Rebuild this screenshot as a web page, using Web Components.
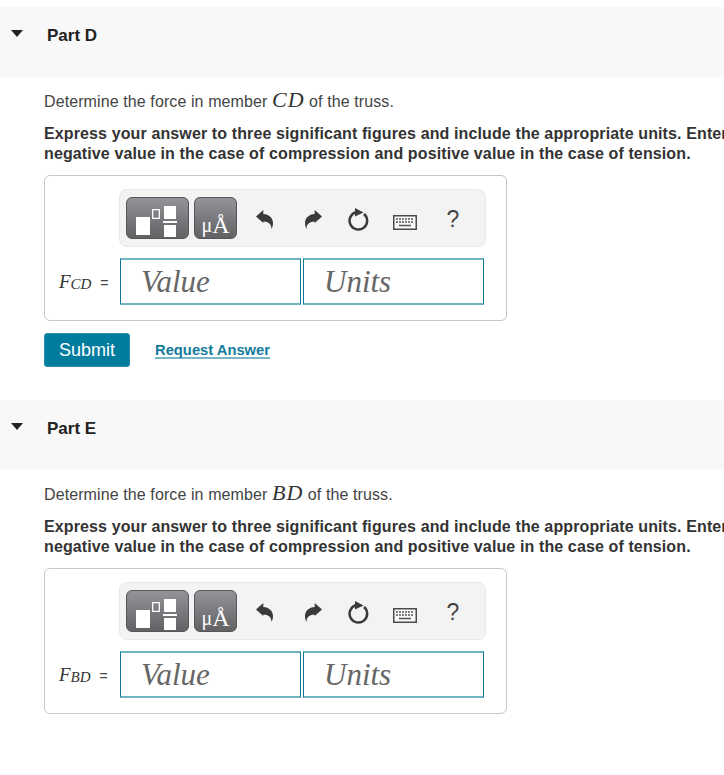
<!DOCTYPE html>
<html>
<head>
<meta charset="utf-8">
<style>
 html, body { margin: 0; background: #fff; overflow: hidden; }
 body { font-family: "Liberation Sans", Arial, sans-serif; color: #333; width: 724px; height: 775px; }
</style>
</head>
<body>
<part-section name="Part D" member="CD" label="F" sub="CD" submit></part-section>
<part-section name="Part E" member="BD" label="F" sub="BD"></part-section>

<template id="tpl-toolbar">
 <style>
  :host { display: flex; box-sizing: border-box; width: 367px; height: 58px; align-items: center; padding: 0 0 0 6px; background: #f3f3f3; border: 1px solid #e8e8e8; border-radius: 8px; }
  .tpl { box-sizing: border-box; height: 42px; border: 1px solid #55555a; border-radius: 6px; background: linear-gradient(#939399, #626264); margin-right: 5px; display: block; flex: none; }
  .a { width: 63px; }
  .b { width: 43px; display: flex; justify-content: center; align-items: flex-end; color: #fff; font-family: "Liberation Serif", serif; font-size: 24px; line-height: 26px; white-space: pre; }
  .b small { font-size: 20px; }
  .a svg, .ico svg { display: block; }
  .ico { flex: none; display: flex; justify-content: center; align-items: center; }
  .q { font-size: 23px; color: #444; line-height: 24px; }
 </style>
 <div class="tpl a"><svg width="61" height="40" viewBox="0 0 61 40">
  <path fill="#fff" d="M9 19h14v18H9zM37 8h12v13H37zM37 27h12v12H37zM36 23h14v2H36z"/>
  <path fill="none" stroke="#fff" stroke-width="1.3" d="M25.7 11.700h6.600v8.600h-6.600z"/>
 </svg></div>
 <div class="tpl b"><small>μ</small>Å</div>
 <div class="ico" style="width:17px;margin-left:14px;margin-top:3px"><svg width="17" height="19" viewBox="0 0 17 19"><path fill="#3a3a3a" d="M0 6.500 7.300 0v4C13 4.300 17 8 17 13c0 2.500-.6 4.300-1.500 6 .1-4.600-3-7.200-8.200-7.400V13z"/></svg></div>
 <div class="ico" style="width:17px;margin-left:32px;margin-top:3px"><svg width="17" height="19" viewBox="0 0 17 19"><path fill="#3a3a3a" d="M17 6.500 9.700 0v4C4 4.300 0 8 0 13c0 2.500.6 4.300 1.500 6-.1-4.600 3-7.200 8.200-7.400V13z"/></svg></div>
 <div class="ico" style="width:22px;margin-left:26px;margin-top:4px"><svg width="22" height="24" viewBox="0 0 22 24"><path fill="none" stroke="#3a3a3a" stroke-width="2.500" d="M8 4.300A8.800 8.800 0 1 0 16 6"/><path fill="#3a3a3a" d="M7 0l8.500 4.500-8.500 4z"/></svg></div>
 <div class="ico" style="width:24px;margin-left:23px;margin-top:10px"><svg width="24" height="15" viewBox="0 0 24 15"><rect x=".75" y=".75" width="22.500" height="13.500" fill="#f8f8f8" stroke="#4a4a4a" stroke-width="1.500"/><path fill="none" stroke="#555" stroke-width="1.500" stroke-dasharray="2 1" d="M3 4h18M3 7h18"/><path stroke="#555" stroke-width="1.500" d="M6 10.500h12"/></svg></div>
 <div class="ico q" style="width:14px;margin-left:29px;margin-top:3px">?</div>
</template>

<template id="tpl-answer">
 <style>
  :host { display: block; box-sizing: border-box; width: 463px; height: 146px; border: 1px solid #c8c8c8; border-radius: 6px; padding: 13px 0 0 74px; background: #fff; }
  .row { display: flex; align-items: center; margin-top: 11px; margin-left: -74px; }
  .lbl { box-sizing: border-box; width: 75px; padding-left: 14px; padding-top: 2px; font-family: "Liberation Serif", serif; color: #333; white-space: pre; }
  .lbl i { font-size: 19px; }
  .lbl span { font-size: 15px; font-style: italic; position: relative; top: 1px; }
  .lbl b { font-family: "Liberation Sans", sans-serif; font-weight: 400; font-size: 14px; color: #444; margin-left: 5px; }
  .field { box-sizing: border-box; width: 181px; height: 47px; margin-right: 2px; border: 1px solid #0b7a9a; border-top: 2px solid #70b3c3; border-bottom: 2px solid #70b3c3; padding: 2px 0 0 20px; display: flex; align-items: center; font: italic 31px "Liberation Serif", serif; color: #666; }
 </style>
 <math-toolbar></math-toolbar>
 <div class="row">
  <div class="lbl"><i id="f"></i><span id="s"></span><b> =</b></div>
  <div class="field">Value</div>
  <div class="field">Units</div>
 </div>
</template>

<template id="tpl-part">
 <style>
  :host { display: block; height: 393px; padding-top: 7px; box-sizing: border-box; overflow: hidden; }
  .band { height: 69.500px; background: #f8f8f8; display: flex; align-items: flex-start; padding: 18px 0 0 11px; box-sizing: border-box; }
  .tri { width: 0; height: 0; border-style: solid; border-width: 7px 6.500px 0; border-color: #222 transparent transparent; margin-top: 5px; }
  h2 { margin: 1px 0 0 24px; font-size: 17px; line-height: 20px; font-weight: 700; color: #222; }
  .body { padding: 13px 0 0 44px; }
  p { margin: 0; font-size: 16px; line-height: 20px; white-space: nowrap; color: #444; letter-spacing: .1px; }
  p i { font: italic 22px/20px "Liberation Serif", serif; color: #333; letter-spacing: 1px; }
  .req { margin-top: 12px; font-weight: 700; color: #333; letter-spacing: .12px; }
  answer-box { margin-top: 11px; }
  .acts { display: flex; align-items: center; margin-top: 12px; }
  .sub { box-sizing: border-box; width: 86px; height: 34px; padding-top: 2px; border-radius: 3px; background: #007c9f; border: 1px solid #2a8daa; color: #fff; display: flex; justify-content: center; align-items: center; font-size: 18px; }
  .link { margin: 2px 0 0 25px; font-size: 14.750px; font-weight: 700; color: #137c9b; border-bottom: 2px solid #7ab6c8; line-height: 14px; }
  [hidden] { display: none; }
 </style>
 <div class="band"><div class="tri"></div><h2 id="name"></h2></div>
 <div class="body">
  <p>Determine the force in member <i id="mem"></i> of the truss.</p>
  <p class="req">Express your answer to three significant figures and include the appropriate units. Enter a<br>negative value in the case of compression and positive value in the case of tension.</p>
  <answer-box id="box"></answer-box>
  <div class="acts" id="acts" hidden><div class="sub">Submit</div><div class="link">Request Answer</div></div>
 </div>
</template>

<script>
function tpl(id) {
 return document.getElementById(id).content.cloneNode(true)
}
class MathToolbar extends HTMLElement {
 constructor() {
  super()
  this.attachShadow({ mode: "open" }).appendChild(tpl("tpl-toolbar"))
 }
}
class AnswerBox extends HTMLElement {
 constructor() {
  super()
  this.attachShadow({ mode: "open" }).appendChild(tpl("tpl-answer"))
 }
 setLabel(f, s) {
  this.shadowRoot.getElementById("f").textContent = f
  this.shadowRoot.getElementById("s").textContent = s
 }
}
class PartSection extends HTMLElement {
 constructor() {
  super()
  this.attachShadow({ mode: "open" }).appendChild(tpl("tpl-part"))
 }
 connectedCallback() {
  const root = this.shadowRoot
  root.getElementById("name").textContent = this.getAttribute("name")
  root.getElementById("mem").textContent = this.getAttribute("member")
  root.getElementById("box").setLabel(this.getAttribute("label"), this.getAttribute("sub"))
  root.getElementById("acts").hidden = !this.hasAttribute("submit")
 }
}
customElements.define("math-toolbar", MathToolbar)
customElements.define("answer-box", AnswerBox)
customElements.define("part-section", PartSection)
</script>
</body>
</html>
